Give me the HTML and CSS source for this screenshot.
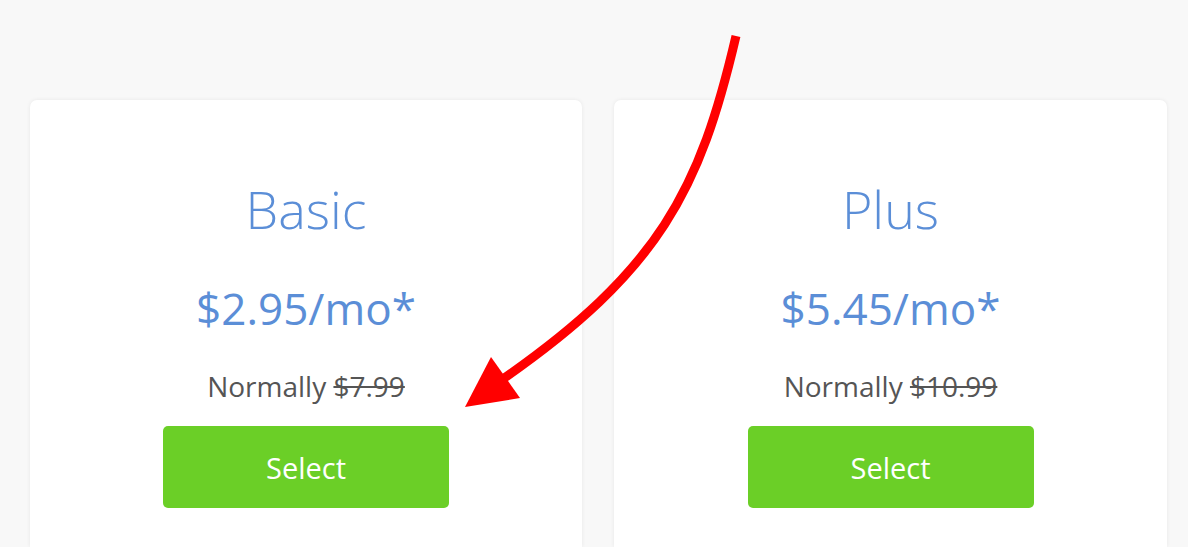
FILE: index.html
```html
<!DOCTYPE html>
<html>
<head>
<meta charset="utf-8">
<link rel="stylesheet" href="styles.css">
</head>
<body>
<div class="plans">
  <div class="card">
    <h2 class="name">Basic</h2>
    <div class="price">$2.95/mo*</div>
    <div class="normal">Normally <s>$7.99</s></div>
    <a class="btn">Select</a>
  </div>
  <div class="card">
    <h2 class="name">Plus</h2>
    <div class="price">$5.45/mo*</div>
    <div class="normal">Normally <s>$10.99</s></div>
    <a class="btn">Select</a>
  </div>
</div>
<svg class="arrow" width="1188" height="547" viewBox="0 0 1188 547">
  <path d="M736 36 C700 190 660 270 500 381" fill="none" stroke="#ff0000" stroke-width="9"/>
  <polygon points="465,407 491,357 520,398" fill="#ff0000"/>
</svg>
</body>
</html>
```
FILE: styles.css
```css
html, body {
  margin: 0;
  padding: 0;
}
body {
  background: #f8f8f8;
  font-family: "Open Sans", "Liberation Sans", sans-serif;
  width: 1188px;
  height: 547px;
  overflow: hidden;
  position: relative;
}
.plans {
  display: grid;
  grid-template-columns: 552px 553px;
  column-gap: 32px;
  padding: 100px 0 0 30px;
}
.card {
  background: #fff;
  border-radius: 7px 7px 0 0;
  box-shadow: 0 0 4px rgba(0, 0, 0, 0.07);
  height: 447px;
  display: flex;
  flex-direction: column;
  align-items: center;
  padding-top: 73px;
  box-sizing: border-box;
}
.name {
  margin: 0;
  font-weight: 300;
  font-size: 52px;
  line-height: 71px;
  color: #5b8ed7;
}
.price {
  margin-top: 34px;
  font-size: 44px;
  line-height: 60px;
  color: #5b8ed7;
}
.normal {
  margin-top: 29px;
  font-size: 28px;
  line-height: 38px;
  color: #555;
}
.normal s {
  text-decoration-thickness: 2px;
}
.btn {
  margin-top: 21px;
  width: 286px;
  height: 82px;
  border-radius: 5px;
  background: #6bcf27;
  color: #fff;
  font-size: 29px;
  display: flex;
  align-items: center;
  justify-content: center;
}
.arrow {
  position: absolute;
  left: 0;
  top: 0;
  pointer-events: none;
}
```
